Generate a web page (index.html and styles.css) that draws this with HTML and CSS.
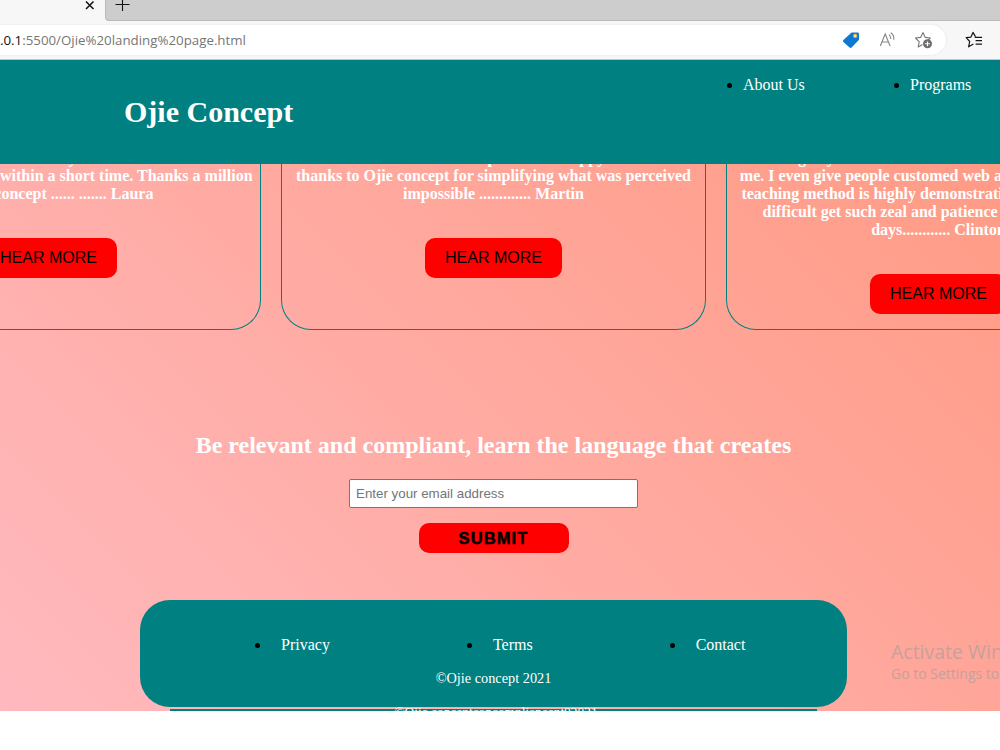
FILE: index.html
```
<!DOCTYPE html>
<html lang="en">
<head>
  <meta charset="UTF-8">
  <title>Ojie Concept</title>
  <link rel="stylesheet" href="styles.css">
</head>
<body>
  <div class="tabs">
    <div class="tab">
      <svg width="10" height="10" viewBox="0 0 10 10"><path d="M1 1.5l7.5 7.5M8.5 1.5L1 9" stroke="#111" stroke-width="1.5" fill="none"/></svg>
    </div>
    <div class="tab-strip">
      <svg width="15" height="15" viewBox="0 0 15 15"><path d="M7.5 0v14M.5 7.5h14" stroke="#111" stroke-width="1.1" fill="none"/></svg>
    </div>
  </div>
  <div class="toolbar">
    <div class="address">
      <span class="url"><b>.0.1</b>:5500/Ojie%20landing%20page.html</span>
      <svg class="icon-tag" width="18" height="18" viewBox="0 0 18 18">
        <path d="M9.6 1.4h6q1.4 0 1.4 1.4v6L9.6 16.6q-1 .9-2 0L1.4 11q-.9-1 0-2z" fill="#0a78d4"/>
        <circle cx="13.2" cy="4.9" r="1.8" fill="#ffe9a8" stroke="#e0a520" stroke-width=".9"/>
      </svg>
      <svg class="icon-read" width="18" height="18" viewBox="0 0 18 18" fill="none" stroke="#858585" stroke-width="1.1">
        <path d="M1.3 15L6.2 3l4.9 12M3 11h6.5M10 3.6q2 1.7 1.8 4.4M11.8 1.8q3.6 2.5 3 7"/>
      </svg>
      <svg class="icon-star" width="19" height="18" viewBox="0 0 19 18">
        <path d="M9 1.5l2.3 4.9 5 .6-3.8 3.8M9 1.5L6.6 6.4 1.4 7l3.8 3.7-1 5.3 4.3-2.4" fill="none" stroke="#777" stroke-width="1.1" stroke-linejoin="round"/>
        <circle cx="13.5" cy="12.8" r="4.5" fill="#6e6e6e"/>
        <path d="M13.5 10.4v4.8M11.1 12.8h4.8" stroke="#fff" stroke-width="1.1"/>
      </svg>
    </div>
    <svg class="icon-fav" width="18" height="18" viewBox="0 0 18 18" fill="none" stroke="#161616" stroke-width="1.2" stroke-linejoin="round">
      <path d="M10.4 5.6L8 1.4 5.9 6.1 1.2 6.7l3.5 3.8-1.1 5.3 4.8-2.7M9.8 6.3H17M10.6 9.7H17M10.6 13.1H17"/>
    </svg>
  </div>

  <div class="page">
    <header>
      <h1>Ojie Concept</h1>
      <ul>
        <li>About Us</li>
        <li>Programs</li>
      </ul>
    </header>

    <section class="reviews">
      <div class="card">
        <p>able to build my website<br>I learnt to code in php within a short time. Thanks a million<br>to Ojie concept ...... ....... Laura</p>
        <button>HEAR MORE</button>
      </div>
      <div class="card">
        <p>I am now a web developer and so happy indeed<br>thanks to Ojie concept for simplifying what was perceived<br>impossible ............. Martin</p>
        <button>HEAR MORE</button>
      </div>
      <div class="card">
        <p>Coding any kind of site is now an easier task for all of<br>me. I even give people customed web apps now. Ojie's best<br>teaching method is highly demonstrative and so it is very..<br>difficult get such zeal and patience in anyone these..<br>days............ Clinton</p>
        <button>HEAR MORE</button>
      </div>
    </section>

    <section class="subscribe">
      <h2>Be relevant and compliant, learn the language that creates</h2>
      <input type="email" placeholder="Enter your email address">
      <button>SUBMIT</button>
    </section>

    <footer>
      <ul>
        <li>Privacy</li>
        <li>Terms</li>
        <li>Contact</li>
      </ul>
      <p>©Ojie concept 2021</p>
    </footer>
    <div class="footer-repeat">©Ojie conceptconcompliancept02021</div>

    <div class="watermark">
      <div class="big">Activate Windows</div>
      <div>Go to Settings to activate Windows.</div>
    </div>
  </div>
</body>
</html>
```
FILE: styles.css
```
* {
  box-sizing: border-box;
}

body {
  margin: 0;
  height: 750px;
  overflow: hidden;
  background: white;
  font-family: "Liberation Serif", "Times New Roman", serif;
}

h1, h2, p, ul {
  margin: 0;
  padding: 0;
}

svg {
  display: block;
  flex-shrink: 0;
}

.tabs {
  display: flex;
  height: 21px;
  background: #f7f7f7;
}

.tab {
  width: 105px;
  padding-left: 85px;
}

.tab-strip {
  flex: 1;
  padding: 0 0 0 9px;
  background: #cdcdcd;
  border-left: 1px solid #bbb;
  border-bottom: 1px solid #bbb;
  border-bottom-left-radius: 4px;
}

.tab-strip svg {
  margin-top: -3px;
}

.toolbar {
  display: flex;
  align-items: center;
  height: 39px;
  background: #f7f7f7;
  border-bottom: 1px solid #c4c4c4;
}

.address {
  display: flex;
  align-items: center;
  width: 946px;
  height: 30px;
  background: white;
  border-radius: 0 15px 15px 0;
  box-shadow: 0 0 2px #ddd;
}

.url {
  width: 842px;
  font-family: "Open Sans", "Noto Sans", sans-serif;
  font-size: 13.3px;
  color: #767676;
}

.url b {
  font-weight: normal;
  color: #111;
}

.icon-read {
  margin-left: 19px;
}

.icon-star {
  margin-left: 17px;
}

.icon-fav {
  margin-left: 19px;
}

.page {
  position: relative;
  height: 651px;
  overflow: hidden;
  background: linear-gradient(45deg, pink -20%, coral 180%);
}

header {
  display: flex;
  height: 104px;
  padding-left: 124px;
  background: teal;
  color: white;
}

header h1 {
  flex: 0 0 619px;
  padding-top: 34px;
  font-size: 30px;
  line-height: 36px;
}

header ul {
  display: flex;
  padding-top: 16px;
  font-size: 16px;
  line-height: 18px;
}

header li {
  width: 167px;
  flex-shrink: 0;
}

li::marker {
  color: black;
}

.reviews {
  display: flex;
  gap: 20px;
  height: 166px;
  margin-left: -164px;
  overflow: hidden;
}

.card {
  flex: 0 0 425px;
  min-width: 0;
  height: 166px;
  border: 1px solid teal;
  border-top: none;
  border-radius: 0 0 30px 30px;
  text-align: center;
}

.card p {
  margin: -15px 0 35px;
  font-size: 16px;
  font-weight: bold;
  line-height: 18px;
  color: white;
  white-space: nowrap;
}

.card button {
  width: 137px;
  height: 40px;
  padding: 0;
  background: red;
  border: none;
  border-radius: 10px;
  font-family: "Liberation Sans", Arial, sans-serif;
  font-size: 16px;
}

.subscribe {
  display: flex;
  flex-direction: column;
  align-items: center;
  width: 987px;
  height: 270px;
  padding-top: 101px;
}

.subscribe h2 {
  font-size: 24px;
  line-height: 28px;
  color: white;
}

.subscribe input {
  width: 289px;
  height: 29px;
  margin: 20px 0 15px;
  padding: 0 6px;
  border: 1px solid #767676;
  border-radius: 2px;
  font-family: "Liberation Sans", Arial, sans-serif;
  font-size: 13.33px;
}

.subscribe button {
  width: 150px;
  height: 30px;
  background: red;
  border: none;
  border-radius: 10px;
  font-family: "Liberation Sans", Arial, sans-serif;
  font-size: 16.5px;
  font-weight: 900;
  letter-spacing: 1.1px;
  -webkit-text-stroke: 0.5px black;
}

footer {
  width: 707px;
  height: 107px;
  margin-left: 140px;
  padding-top: 36px;
  background: teal;
  border-radius: 30px;
  color: white;
}

footer ul {
  display: flex;
  gap: 163px;
  padding-left: 141px;
  font-size: 16px;
  line-height: 18px;
  list-style: none;
}

footer li {
  position: relative;
}

footer li::before {
  content: "";
  position: absolute;
  left: -26px;
  top: 7px;
  width: 5px;
  height: 5px;
  border-radius: 50%;
  background: black;
}

footer p {
  margin-top: 16px;
  font-size: 14.3px;
  line-height: 16px;
  text-align: center;
}

/* top edge of the next footer, cut off by the window */
.footer-repeat {
  height: 10px;
  width: 647px;
  margin: 2px 0 0 170px;
  padding-left: 5px;
  background: teal;
  color: white;
  font-size: 13.4px;
  line-height: 5px;
  text-align: center;
}

.watermark {
  position: absolute;
  left: 891px;
  top: 579px;
  font-family: "Open Sans", "Noto Sans", sans-serif;
  font-size: 14px;
  line-height: 20px;
  color: #c8a09b;
  white-space: nowrap;
}

.watermark .big {
  font-size: 19.5px;
  line-height: 25px;
}
```
